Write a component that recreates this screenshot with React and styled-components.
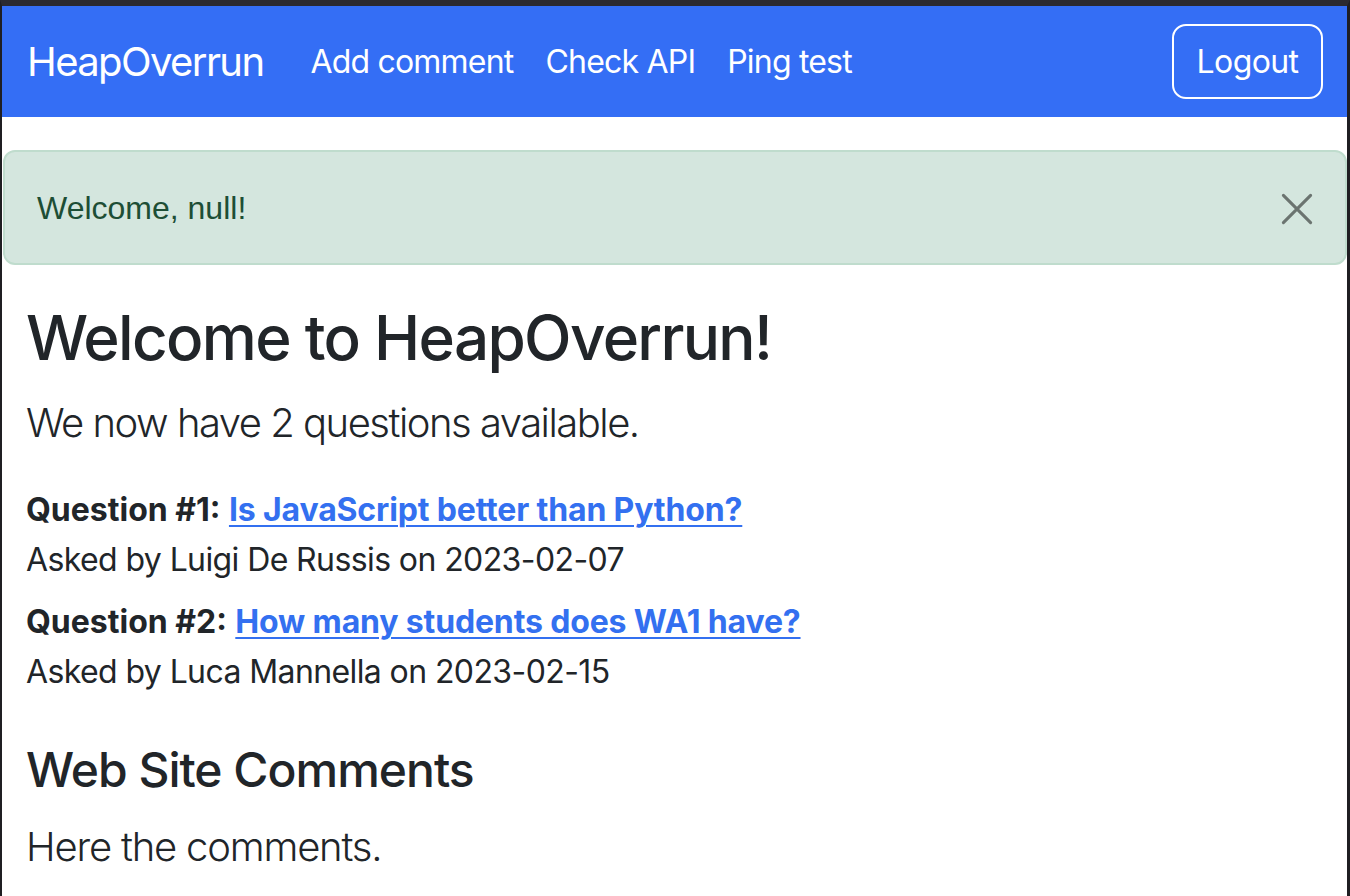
import React from 'react'
import styled, { createGlobalStyle } from 'styled-components'

const GlobalStyle = createGlobalStyle`
    html, body {
        margin:0;
        padding:0;
        background:#ffffff;
    }
    * {
        box-sizing:border-box;
    }
`

const questions = [
    { id: 1, text: 'Is JavaScript better than Python?', author: 'Luigi De Russis', date: '2023-02-07' },
    { id: 2, text: 'How many students does WA1 have?', author: 'Luca Mannella', date: '2023-02-15' },
]

function App() {
    return (
        <>
        <GlobalStyle />
        <Frame>
            <Navbar>
                <Brand href="#">HeapOverrun</Brand>
                <NavLinks>
                    <NavLink href="#">Add comment</NavLink>
                    <NavLink href="#">Check API</NavLink>
                    <NavLink href="#">Ping test</NavLink>
                </NavLinks>
                <LogoutButton>Logout</LogoutButton>
            </Navbar>

            <Alert>
                <AlertText>Welcome, null!</AlertText>
                <CloseButton aria-label="Close">
                    <svg width="34" height="34" viewBox="0 0 16 16">
                        <path d="M1.6 1.6 L14.4 14.4 M14.4 1.6 L1.6 14.4" stroke="currentColor" strokeWidth="1.45" strokeLinecap="round" fill="none" />
                    </svg>
                </CloseButton>
            </Alert>

            <Main>
                <Title>Welcome to HeapOverrun!</Title>
                <Lead $spacing={-1.5}>We now have {questions.length} questions available.</Lead>
                <QuestionList>
                    {questions.map(q => (
                        <QuestionItem key={q.id}>
                            <strong>Question #{q.id}:</strong> <QuestionLink href="#">{q.text}</QuestionLink>
                            <br />
                            Asked by {q.author} on {q.date}
                        </QuestionItem>
                    ))}
                </QuestionList>
                <SubTitle>Web Site Comments</SubTitle>
                <Lead $top={18}>Here the comments.</Lead>
            </Main>
        </Frame>
        </>
    )
}

export default App

const Frame = styled.div`
    min-height:100vh;
    border-top:6px solid #2b2a2f;
    border-left:2px solid #1f1e22;
    border-right:3px solid #1f1e22;
    background:#ffffff;
    font-family:Inter, "Noto Sans", sans-serif;
    color:#212529;
`
const Navbar = styled.nav`
    height:111px;
    background-color:#346ef5;
    display:flex;
    align-items:center;
    padding:0 24px 0 25px;
`
const Brand = styled.a`
    color:#ffffff;
    text-decoration:none;
    font-size:40px;
    letter-spacing:-1.6px;
    margin-right:31px;
`
const NavLinks = styled.div`
    display:flex;
    align-items:center;
`
const NavLink = styled.a`
    color:#ffffff;
    text-decoration:none;
    font-size:32px;
    padding:0 16px;
    letter-spacing:-0.8px;
`
const LogoutButton = styled.button`
    margin-left:auto;
    width:151px;
    height:75px;
    border:2px solid #ffffff;
    border-radius:14px;
    background:transparent;
    color:#ffffff;
    font-family:inherit;
    font-size:32px;
    letter-spacing:-0.6px;
    cursor:pointer;
`
const Alert = styled.div`
    margin:33px 0 0 1px;
    height:115px;
    background:#d4e6de;
    border:2px solid #bfdccd;
    border-radius:12px;
    display:flex;
    align-items:center;
    justify-content:space-between;
    padding:2px 31px 0 32px;
`
const AlertText = styled.span`
    font-family:"Liberation Sans", Arial, sans-serif;
    font-size:32px;
    color:#1d4e35;
`
const CloseButton = styled.button`
    border:0;
    background:transparent;
    padding:0;
    color:#6b7470;
    display:flex;
    cursor:pointer;
`
const Main = styled.main`
    padding:0 24px;
`
const Title = styled.h1`
    font-size:62px;
    font-weight:500;
    line-height:1.2;
    letter-spacing:-1.7px;
    margin:36px 0 18px 0;
`
const Lead = styled.p`
    font-size:40px;
    font-weight:300;
    line-height:1.5;
    letter-spacing:${p => p.$spacing ?? -1.2}px;
    margin:${p => p.$top || 0}px 0 32px 0;
`
const QuestionList = styled.div`
    display:flex;
    flex-direction:column;
    gap:12px;
    margin-bottom:44px;
`
const QuestionItem = styled.p`
    font-size:32px;
    line-height:50px;
    margin:0;
    letter-spacing:-0.6px;
    strong {
        font-weight:700;
        letter-spacing:0;
    }
`
const QuestionLink = styled.a`
    color:#3370f0;
    font-weight:700;
    letter-spacing:-0.15px;
    text-decoration:underline;
    text-underline-offset:4px;
    text-decoration-thickness:2px;
`
const SubTitle = styled.h3`
    font-size:48px;
    font-weight:500;
    line-height:1.2;
    letter-spacing:-1px;
    margin:0;
`
